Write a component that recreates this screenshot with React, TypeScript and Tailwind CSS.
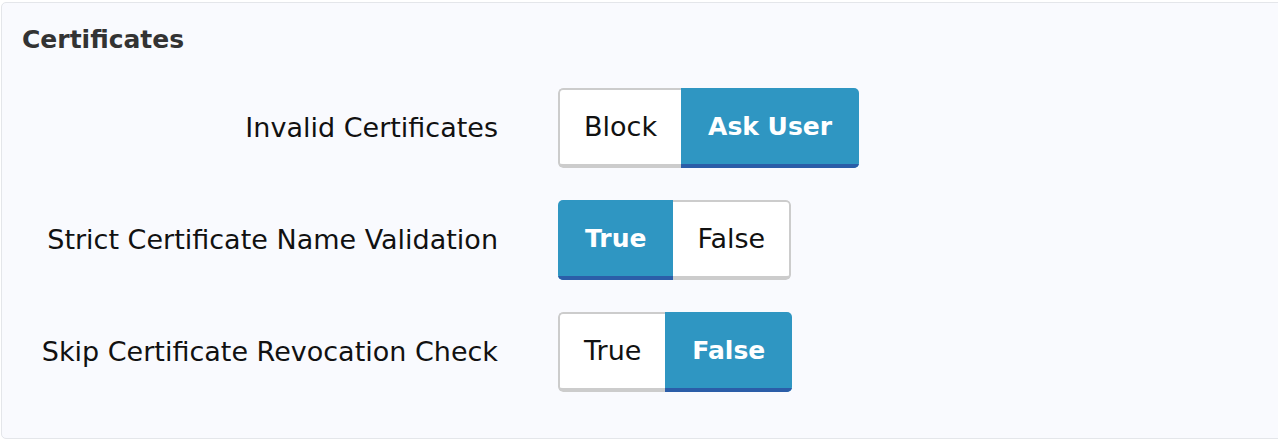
import { useState } from "react";

type Option = { label: string; value: string };

interface SegmentedProps {
  options: Option[];
  value: string;
  onChange: (v: string) => void;
}

function Segmented({ options, value, onChange }: SegmentedProps) {
  return (
    <div className="inline-flex h-[80px] rounded-[5px] overflow-hidden">
      {options.map((opt, i) => {
        const active = opt.value === value;
        const first = i === 0;
        const last = i === options.length - 1;
        return (
          <button
            key={opt.value}
            onClick={() => onChange(opt.value)}
            className={
              active
                ? "h-full px-[27px] flex items-center bg-[#2f96c2] text-white text-[25px] font-bold border-b-4 border-b-[#2b5da8] pt-[2px]"
                : `h-full px-[24px] flex items-center bg-white text-[#111] text-[27px] border-t-2 border-b-4 border-[#cccccc] ${
                    first ? "border-l-2 rounded-l-[5px]" : ""
                  } ${last ? "border-r-2 rounded-r-[5px]" : ""}`
            }
          >
            {opt.label}
          </button>
        );
      })}
    </div>
  );
}

export default function App() {
  const [invalid, setInvalid] = useState("ask");
  const [strict, setStrict] = useState("true");
  const [skip, setSkip] = useState("false");

  const rows = [
    {
      label: "Invalid Certificates",
      options: [
        { label: "Block", value: "block" },
        { label: "Ask User", value: "ask" },
      ],
      value: invalid,
      onChange: setInvalid,
    },
    {
      label: "Strict Certificate Name Validation",
      options: [
        { label: "True", value: "true" },
        { label: "False", value: "false" },
      ],
      value: strict,
      onChange: setStrict,
    },
    {
      label: "Skip Certificate Revocation Check",
      options: [
        { label: "True", value: "true" },
        { label: "False", value: "false" },
      ],
      value: skip,
      onChange: setSkip,
    },
  ];

  return (
    <div
      className="h-[440px] bg-white pt-[2px] pl-[1px] overflow-hidden text-[27px] leading-[1.5]"
      style={{ fontFamily: '"DejaVu Sans", sans-serif' }}
    >
      <div className="w-[1300px] h-[437px] border border-[#e4e6ea] rounded-[5px] bg-[#f9fafe]">
        <h2 className="pl-[20px] pt-[19px] text-[25px] leading-[36px] font-bold text-[#333]">
          Certificates
        </h2>
        <div className="mt-[30px] flex flex-col gap-[32px]">
          {rows.map((row) => (
            <div key={row.label} className="flex items-center">
              <div className="w-[496px] text-right text-[#111]">{row.label}</div>
              <div className="ml-[60px]">
                <Segmented
                  options={row.options}
                  value={row.value}
                  onChange={row.onChange}
                />
              </div>
            </div>
          ))}
        </div>
      </div>
    </div>
  );
}
